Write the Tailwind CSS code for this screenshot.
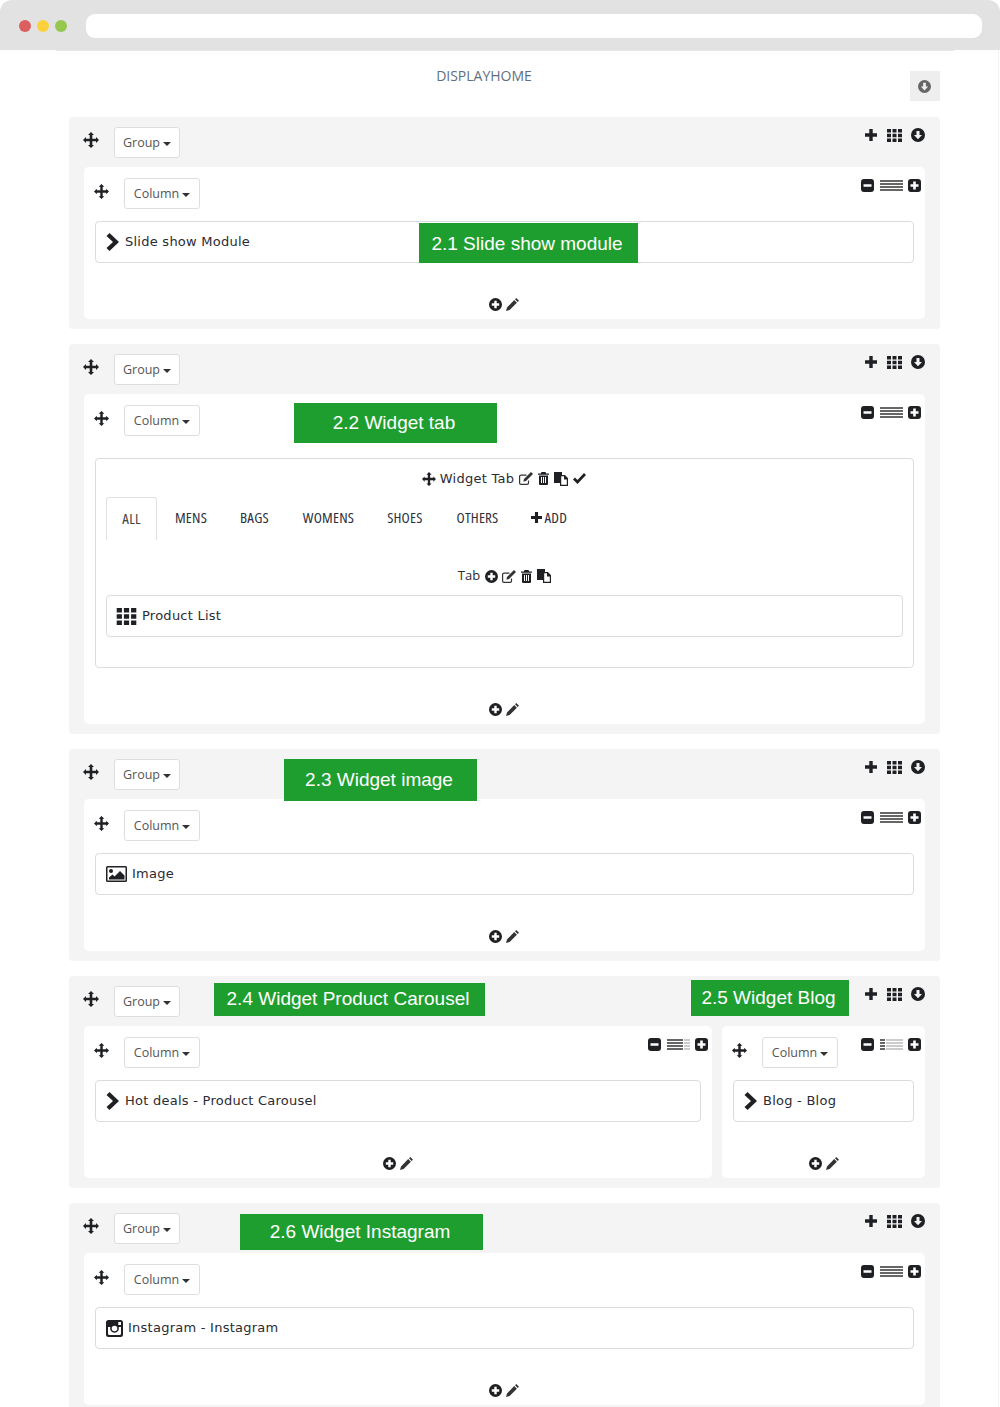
<!doctype html>
<html>
<head>
<meta charset="utf-8">
<title>Displayhome</title>
<script src="https://cdn.jsdelivr.net/npm/@tailwindcss/browser@4"></script>
</head>
<body class="bg-white">
<svg class="hidden">
  <symbol id="move" viewBox="0 0 16 16"><path d="M8 0l3 3H9.3v3.700H13V5l3 3-3 3V9.300H9.300V13H11l-3 3-3-3h1.700V9.300H3V11L0 8l3-3v1.700h3.700V3H5z"/></symbol>
  <symbol id="plus" viewBox="0 0 12 12"><path d="M4.300 0h3.400v4.300H12v3.400H7.700V12H4.300V7.700H0V4.300h4.300z"/></symbol>
  <symbol id="th" viewBox="0 0 15 13"><path d="M0 0h4v3.500H0zM5.500 0h4v3.500h-4zM11 0h4v3.500h-4zM0 4.800h4v3.400H0zM5.500 4.800h4v3.400h-4zM11 4.800h4v3.400h-4zM0 9.500h4V13H0zM5.500 9.500h4V13h-4zM11 9.500h4V13h-4z"/></symbol>
  <symbol id="circle-down" viewBox="0 0 14 14"><path fill-rule="evenodd" d="M7 0a7 7 0 1 1 0 14A7 7 0 0 1 7 0zM5.500 3v4H3l4 4.300L11 7H8.500V3z"/></symbol>
  <symbol id="circle-plus" viewBox="0 0 14 14"><path fill-rule="evenodd" d="M7 0a7 7 0 1 1 0 14A7 7 0 0 1 7 0zM5.700 3v2.700H3v2.600h2.700V11h2.600V8.300H11V5.700H8.300V3z"/></symbol>
  <symbol id="square-minus" viewBox="0 0 13 13"><path fill-rule="evenodd" d="M3 0h7a3 3 0 0 1 3 3v7a3 3 0 0 1-3 3H3a3 3 0 0 1-3-3V3a3 3 0 0 1 3-3zM2.500 5.200v2.600h8V5.200z"/></symbol>
  <symbol id="square-plus" viewBox="0 0 13 13"><path fill-rule="evenodd" d="M3 0h7a3 3 0 0 1 3 3v7a3 3 0 0 1-3 3H3a3 3 0 0 1-3-3V3a3 3 0 0 1 3-3zM5.200 2.500v2.700H2.500v2.600h2.700v2.700h2.600V7.800h2.700V5.200H7.800V2.500z"/></symbol>
  <symbol id="chevron" viewBox="0 0 13 18"><path d="M3.500 0L13 9l-9.500 9L.5 15l6.500-6L.5 3z"/></symbol>
  <symbol id="pencil" viewBox="0 0 13 13"><path d="M10.300 0L13 2.700l-1.300 1.300L9 1.300zM8.200 2.100l2.700 2.700L3.600 12 0 13l1-3.600z"/></symbol>
  <symbol id="edit" viewBox="0 0 14 13"><path fill="none" stroke="currentColor" stroke-width="1.200" d="M9.500 8.500V11a1.400 1.400 0 0 1-1.400 1.400H2A1.400 1.400 0 0 1 .6 11V4.500A1.400 1.400 0 0 1 2 3.100h5.500"/><path d="M12 0l2 2-7 7-2.600.7L5 7z"/></symbol>
  <symbol id="trash" viewBox="0 0 11 13"><path fill-rule="evenodd" d="M3.500 0h4l.7 1.500H11v1.300H0V1.500h2.800zM1 3.500h9V12a1 1 0 0 1-1 1H2a1 1 0 0 1-1-1zM3 5v6h1V5zM5 5v6h1V5zM7 5v6h1V5z"/></symbol>
  <symbol id="files" viewBox="0 0 14 14"><path d="M0 0h8v3H6v8H0z"/><path fill="#fff" stroke="currentColor" stroke-width="1.200" d="M6.600 3.600h4l2.800 2.800v7H6.600z"/><path d="M10 3.500h1l3 3v1h-4z"/></symbol>
  <symbol id="check" viewBox="0 0 13 11"><path d="M4.500 11L0 6.500l2-2 2.500 2.500L11 0l2 2z"/></symbol>
  <symbol id="picture" viewBox="0 0 21 16"><path fill-rule="evenodd" d="M1.500 0h18A1.500 1.500 0 0 1 21 1.500v13a1.500 1.500 0 0 1-1.500 1.500h-18A1.500 1.500 0 0 1 0 14.500v-13A1.500 1.500 0 0 1 1.500 0zM1.500 1.500v13h18v-13z"/><circle cx="5" cy="5" r="2"/><path d="M3 13.500v-2l3.500-3 2 2L14 5l4.500 4.500v4z"/></symbol>
  <symbol id="instagram" viewBox="0 0 17 17"><path fill-rule="evenodd" d="M2.500 0h12A2.500 2.500 0 0 1 17 2.500v12a2.500 2.500 0 0 1-2.500 2.500h-12A2.500 2.500 0 0 1 0 14.500v-12A2.500 2.500 0 0 1 2.500 0zM2 7v6.500A1.500 1.500 0 0 0 3.500 15h10a1.500 1.500 0 0 0 1.500-1.500V7h-2.300a4.400 4.400 0 1 1-8.400 0zM8.500 5.700a2.800 2.800 0 1 0 0 5.600 2.800 2.800 0 0 0 0-5.600zM12.300 2v3H15V2z"/></symbol>
</svg>

<div class="relative h-[1407px] w-[1000px] overflow-hidden font-['DejaVu_Sans',sans-serif] text-[13px] tracking-[.25px] text-[#2b2b33]">
  <div class="absolute right-[1px] top-[50px] bottom-0 w-px bg-[#f3f3f3]"></div>

  <!-- browser chrome -->
  <div class="flex h-[50px] items-center rounded-t-[12px] bg-[#e2e2e2] pl-[19px] pr-[18px] pt-[2px]">
    <span class="h-3 w-3 rounded-full bg-[#dc5f5f]"></span>
    <span class="ml-[6px] h-3 w-3 rounded-full bg-[#fdd13c]"></span>
    <span class="ml-[6px] h-3 w-3 rounded-full bg-[#96c74f]"></span>
    <div class="ml-[19px] h-6 flex-1 rounded-[9px] bg-white"></div>
  </div>
  <div class="ml-[56px] h-px w-[898px] bg-[#e6e6e6]"></div>

  <main class="ml-[69px] w-[871px]">
    <div class="relative h-[66px]">
      <div class="pr-[41px] pt-[15px] text-center font-['Open_Sans',sans-serif] text-[14px] leading-[20px] tracking-normal text-[#5f6f80]">DISPLAYHOME</div>
      <div class="absolute right-0 top-[20px] flex h-[30px] w-[30px] items-center justify-center bg-[#eeeeee] pr-[2px] text-[#666]">
        <svg class="h-[13px] w-[13px] fill-current"><use href="#circle-down"/></svg>
      </div>
    </div>

    <div class="flex flex-col gap-[15px]">

      <!-- group 1 -->
      <section class="relative h-[212px] rounded-[4px] bg-[#f4f4f4] px-[15px]">
        <div class="flex h-[50px] items-start pt-[10px]">
          <svg class="ml-[-1px] mt-[5px] h-[16px] w-[16px] fill-[#1f2024]"><use href="#move"/></svg>
          <button class="ml-[15px] flex h-[31px] w-[66px] items-center justify-center rounded-[3px] border border-[#dedede] bg-white pt-[2px] font-['Open_Sans',sans-serif] text-[12.500px] tracking-normal text-[#555]">Group<span class="ml-[3px] border-x-4 border-t-4 border-x-transparent border-t-[#333]"></span></button>
          <div class="ml-auto mt-[1px] flex items-center">
            <svg class="h-[12px] w-[12px] fill-[#1f2024]"><use href="#plus"/></svg>
            <svg class="ml-[10px] h-[13px] w-[15px] fill-[#1f2024]"><use href="#th"/></svg>
            <svg class="ml-[9px] h-[14px] w-[14px] fill-[#1f2024]"><use href="#circle-down"/></svg>
          </div>
        </div>
        <div class="h-[152px] rounded-[5px] bg-white px-[11px]">
          <div class="flex h-[54px] items-start pt-[11px]">
            <svg class="ml-[-1px] mt-[6px] h-[15px] w-[15px] fill-[#1f2024]"><use href="#move"/></svg>
            <button class="ml-[15px] flex h-[31px] w-[76px] items-center justify-center rounded-[3px] border border-[#dedede] bg-white pt-[2px] font-['Open_Sans',sans-serif] text-[12.500px] tracking-normal text-[#555]">Column<span class="ml-[3px] border-x-4 border-t-4 border-x-transparent border-t-[#333]"></span></button>
            <div class="ml-auto mr-[-7px] mt-[1px] flex items-center">
              <svg class="h-[13px] w-[13px] fill-[#1f2024]"><use href="#square-minus"/></svg>
              <div class="ml-[6px] flex h-[11px] w-[23px] flex-col justify-between"><i class="h-[2px] bg-[#666]"></i><i class="h-[2px] bg-[#666]"></i><i class="h-[2px] bg-[#666]"></i><i class="h-[2px] bg-[#666]"></i></div>
              <svg class="ml-[5px] h-[13px] w-[13px] fill-[#1f2024]"><use href="#square-plus"/></svg>
            </div>
          </div>
          <div class="flex h-[42px] items-center rounded-[4px] border border-[#dcdcdc] pl-[10px]">
            <svg class="h-[18px] w-[13px] fill-[#1f2024]"><use href="#chevron"/></svg>
            <span class="ml-[6px]">Slide show Module</span>
          </div>
          <div class="mt-[35px] flex items-center justify-center pr-[2px]">
            <svg class="h-[13px] w-[13px] fill-[#1f2024]"><use href="#circle-plus"/></svg>
            <svg class="ml-[4px] h-[13px] w-[13px] fill-[#333]"><use href="#pencil"/></svg>
          </div>
        </div>
        <div class="absolute left-[350px] top-[106px] flex h-[40px] w-[219px] items-center justify-center bg-[#1f9e30] pr-[3px] pt-[2px] font-['Liberation_Sans',sans-serif] text-[19px] tracking-normal text-white">2.1 Slide show module</div>
      </section>

      <!-- group 2 -->
      <section class="relative h-[390px] rounded-[4px] bg-[#f4f4f4] px-[15px]">
        <div class="flex h-[50px] items-start pt-[10px]">
          <svg class="ml-[-1px] mt-[5px] h-[16px] w-[16px] fill-[#1f2024]"><use href="#move"/></svg>
          <button class="ml-[15px] flex h-[31px] w-[66px] items-center justify-center rounded-[3px] border border-[#dedede] bg-white pt-[2px] font-['Open_Sans',sans-serif] text-[12.500px] tracking-normal text-[#555]">Group<span class="ml-[3px] border-x-4 border-t-4 border-x-transparent border-t-[#333]"></span></button>
          <div class="ml-auto mt-[1px] flex items-center">
            <svg class="h-[12px] w-[12px] fill-[#1f2024]"><use href="#plus"/></svg>
            <svg class="ml-[10px] h-[13px] w-[15px] fill-[#1f2024]"><use href="#th"/></svg>
            <svg class="ml-[9px] h-[14px] w-[14px] fill-[#1f2024]"><use href="#circle-down"/></svg>
          </div>
        </div>
        <div class="h-[330px] rounded-[5px] bg-white px-[11px]">
          <div class="flex h-[64px] items-start pt-[11px]">
            <svg class="ml-[-1px] mt-[6px] h-[15px] w-[15px] fill-[#1f2024]"><use href="#move"/></svg>
            <button class="ml-[15px] flex h-[31px] w-[76px] items-center justify-center rounded-[3px] border border-[#dedede] bg-white pt-[2px] font-['Open_Sans',sans-serif] text-[12.500px] tracking-normal text-[#555]">Column<span class="ml-[3px] border-x-4 border-t-4 border-x-transparent border-t-[#333]"></span></button>
            <div class="ml-auto mr-[-7px] mt-[1px] flex items-center">
              <svg class="h-[13px] w-[13px] fill-[#1f2024]"><use href="#square-minus"/></svg>
              <div class="ml-[6px] flex h-[11px] w-[23px] flex-col justify-between"><i class="h-[2px] bg-[#666]"></i><i class="h-[2px] bg-[#666]"></i><i class="h-[2px] bg-[#666]"></i><i class="h-[2px] bg-[#666]"></i></div>
              <svg class="ml-[5px] h-[13px] w-[13px] fill-[#1f2024]"><use href="#square-plus"/></svg>
            </div>
          </div>
          <!-- widget tab -->
          <div class="h-[210px] rounded-[4px] border border-[#dcdcdc] px-[10px]">
            <div class="flex h-[38px] items-center justify-center pr-[1px] pt-[1px]">
              <svg class="h-[14px] w-[14px] fill-[#1f2024]"><use href="#move"/></svg>
              <span class="ml-[4px]">Widget Tab</span>
              <svg class="ml-[5px] h-[13px] w-[14px] fill-[#333] text-[#333]"><use href="#edit"/></svg>
              <svg class="ml-[5px] h-[13px] w-[11px] fill-[#1f2024]"><use href="#trash"/></svg>
              <svg class="ml-[5px] h-[14px] w-[14px] fill-[#1f2024] text-[#1f2024]"><use href="#files"/></svg>
              <svg class="ml-[5px] h-[11px] w-[13px] fill-[#1f2024]"><use href="#check"/></svg>
            </div>
            <ul class="flex h-[43px] items-center pb-[2px] font-['Open_Sans',sans-serif] text-[15px] font-stretch-condensed tracking-[.2px] text-[#2b3040]">
              <li class="mt-[2px] flex h-[43px] w-[51px] items-center justify-center rounded-t-[3px] border-x border-t border-[#e2e2e2] pb-[2px] text-[#444]">ALL</li>
              <li class="ml-[18px]">MENS</li>
              <li class="ml-[33px]">BAGS</li>
              <li class="ml-[34px]">WOMENS</li>
              <li class="ml-[33px]">SHOES</li>
              <li class="ml-[34px]">OTHERS</li>
              <li class="ml-[33px] flex items-center"><svg class="mr-[2px] h-[11px] w-[11px] fill-[#1f2024]"><use href="#plus"/></svg>ADD</li>
            </ul>
            <div class="flex h-[55px] items-center justify-center pt-[17px] font-['Open_Sans',sans-serif] tracking-normal">
              <span class="text-[13px]">Tab</span>
              <svg class="ml-[5px] h-[13px] w-[13px] fill-[#1f2024]"><use href="#circle-plus"/></svg>
              <svg class="ml-[4px] h-[13px] w-[14px] fill-[#333] text-[#333]"><use href="#edit"/></svg>
              <svg class="ml-[5px] h-[13px] w-[11px] fill-[#1f2024]"><use href="#trash"/></svg>
              <svg class="ml-[5px] h-[14px] w-[14px] fill-[#1f2024] text-[#1f2024]"><use href="#files"/></svg>
            </div>
            <div class="flex h-[42px] items-center rounded-[4px] border border-[#dcdcdc] pl-[9px]">
              <svg class="h-[17px] w-[21px] fill-[#1f2024]"><use href="#th"/></svg>
              <span class="ml-[5px]">Product List</span>
            </div>
          </div>
          <div class="mt-[35px] flex items-center justify-center pr-[2px]">
            <svg class="h-[13px] w-[13px] fill-[#1f2024]"><use href="#circle-plus"/></svg>
            <svg class="ml-[4px] h-[13px] w-[13px] fill-[#333]"><use href="#pencil"/></svg>
          </div>
        </div>
        <div class="absolute left-[225px] top-[59px] flex h-[40px] w-[203px] items-center justify-center bg-[#1f9e30] pr-[3px] font-['Liberation_Sans',sans-serif] text-[19px] tracking-normal text-white">2.2 Widget tab</div>
      </section>

      <!-- group 3 -->
      <section class="relative h-[212px] rounded-[4px] bg-[#f4f4f4] px-[15px]">
        <div class="flex h-[50px] items-start pt-[10px]">
          <svg class="ml-[-1px] mt-[5px] h-[16px] w-[16px] fill-[#1f2024]"><use href="#move"/></svg>
          <button class="ml-[15px] flex h-[31px] w-[66px] items-center justify-center rounded-[3px] border border-[#dedede] bg-white pt-[2px] font-['Open_Sans',sans-serif] text-[12.500px] tracking-normal text-[#555]">Group<span class="ml-[3px] border-x-4 border-t-4 border-x-transparent border-t-[#333]"></span></button>
          <div class="ml-auto mt-[1px] flex items-center">
            <svg class="h-[12px] w-[12px] fill-[#1f2024]"><use href="#plus"/></svg>
            <svg class="ml-[10px] h-[13px] w-[15px] fill-[#1f2024]"><use href="#th"/></svg>
            <svg class="ml-[9px] h-[14px] w-[14px] fill-[#1f2024]"><use href="#circle-down"/></svg>
          </div>
        </div>
        <div class="h-[152px] rounded-[5px] bg-white px-[11px]">
          <div class="flex h-[54px] items-start pt-[11px]">
            <svg class="ml-[-1px] mt-[6px] h-[15px] w-[15px] fill-[#1f2024]"><use href="#move"/></svg>
            <button class="ml-[15px] flex h-[31px] w-[76px] items-center justify-center rounded-[3px] border border-[#dedede] bg-white pt-[2px] font-['Open_Sans',sans-serif] text-[12.500px] tracking-normal text-[#555]">Column<span class="ml-[3px] border-x-4 border-t-4 border-x-transparent border-t-[#333]"></span></button>
            <div class="ml-auto mr-[-7px] mt-[1px] flex items-center">
              <svg class="h-[13px] w-[13px] fill-[#1f2024]"><use href="#square-minus"/></svg>
              <div class="ml-[6px] flex h-[11px] w-[23px] flex-col justify-between"><i class="h-[2px] bg-[#666]"></i><i class="h-[2px] bg-[#666]"></i><i class="h-[2px] bg-[#666]"></i><i class="h-[2px] bg-[#666]"></i></div>
              <svg class="ml-[5px] h-[13px] w-[13px] fill-[#1f2024]"><use href="#square-plus"/></svg>
            </div>
          </div>
          <div class="flex h-[42px] items-center rounded-[4px] border border-[#dcdcdc] pl-[10px]">
            <svg class="h-[16px] w-[21px] fill-[#1f2024]"><use href="#picture"/></svg>
            <span class="ml-[5px]">Image</span>
          </div>
          <div class="mt-[35px] flex items-center justify-center pr-[2px]">
            <svg class="h-[13px] w-[13px] fill-[#1f2024]"><use href="#circle-plus"/></svg>
            <svg class="ml-[4px] h-[13px] w-[13px] fill-[#333]"><use href="#pencil"/></svg>
          </div>
        </div>
        <div class="absolute left-[215px] top-[10px] flex h-[42px] w-[193px] items-center justify-center bg-[#1f9e30] pr-[3px] font-['Liberation_Sans',sans-serif] text-[19px] tracking-normal text-white">2.3 Widget image</div>
      </section>

      <!-- group 4 -->
      <section class="relative h-[212px] rounded-[4px] bg-[#f4f4f4] px-[15px]">
        <div class="flex h-[50px] items-start pt-[10px]">
          <svg class="ml-[-1px] mt-[5px] h-[16px] w-[16px] fill-[#1f2024]"><use href="#move"/></svg>
          <button class="ml-[15px] flex h-[31px] w-[66px] items-center justify-center rounded-[3px] border border-[#dedede] bg-white pt-[2px] font-['Open_Sans',sans-serif] text-[12.500px] tracking-normal text-[#555]">Group<span class="ml-[3px] border-x-4 border-t-4 border-x-transparent border-t-[#333]"></span></button>
          <div class="ml-auto mt-[1px] flex items-center">
            <svg class="h-[12px] w-[12px] fill-[#1f2024]"><use href="#plus"/></svg>
            <svg class="ml-[10px] h-[13px] w-[15px] fill-[#1f2024]"><use href="#th"/></svg>
            <svg class="ml-[9px] h-[14px] w-[14px] fill-[#1f2024]"><use href="#circle-down"/></svg>
          </div>
        </div>
        <div class="flex gap-[10px]">
          <div class="h-[152px] w-[628px] rounded-[5px] bg-white px-[11px]">
            <div class="flex h-[54px] items-start pt-[11px]">
              <svg class="ml-[-1px] mt-[6px] h-[15px] w-[15px] fill-[#1f2024]"><use href="#move"/></svg>
              <button class="ml-[15px] flex h-[31px] w-[76px] items-center justify-center rounded-[3px] border border-[#dedede] bg-white pt-[2px] font-['Open_Sans',sans-serif] text-[12.500px] tracking-normal text-[#555]">Column<span class="ml-[3px] border-x-4 border-t-4 border-x-transparent border-t-[#333]"></span></button>
              <div class="ml-auto mr-[-7px] mt-[1px] flex items-center">
                <svg class="h-[13px] w-[13px] fill-[#1f2024]"><use href="#square-minus"/></svg>
                <div class="ml-[6px] flex h-[11px] w-[23px] flex-col justify-between"><i class="h-[2px] bg-[linear-gradient(90deg,#666_16px,#fff_16px,#fff_17px,#ccc_17px)]"></i><i class="h-[2px] bg-[linear-gradient(90deg,#666_16px,#fff_16px,#fff_17px,#ccc_17px)]"></i><i class="h-[2px] bg-[linear-gradient(90deg,#666_16px,#fff_16px,#fff_17px,#ccc_17px)]"></i><i class="h-[2px] bg-[linear-gradient(90deg,#666_16px,#fff_16px,#fff_17px,#ccc_17px)]"></i></div>
                <svg class="ml-[5px] h-[13px] w-[13px] fill-[#1f2024]"><use href="#square-plus"/></svg>
              </div>
            </div>
            <div class="flex h-[42px] items-center rounded-[4px] border border-[#dcdcdc] pl-[10px]">
              <svg class="h-[18px] w-[13px] fill-[#1f2024]"><use href="#chevron"/></svg>
              <span class="ml-[6px]">Hot deals - Product Carousel</span>
            </div>
            <div class="mt-[35px] flex items-center justify-center">
              <svg class="h-[13px] w-[13px] fill-[#1f2024]"><use href="#circle-plus"/></svg>
              <svg class="ml-[4px] h-[13px] w-[13px] fill-[#333]"><use href="#pencil"/></svg>
            </div>
          </div>
          <div class="h-[152px] w-[203px] rounded-[5px] bg-white px-[11px]">
            <div class="flex h-[54px] items-start pt-[11px]">
              <svg class="ml-[-1px] mt-[6px] h-[15px] w-[15px] fill-[#1f2024]"><use href="#move"/></svg>
              <button class="ml-[15px] flex h-[31px] w-[76px] items-center justify-center rounded-[3px] border border-[#dedede] bg-white pt-[2px] font-['Open_Sans',sans-serif] text-[12.500px] tracking-normal text-[#555]">Column<span class="ml-[3px] border-x-4 border-t-4 border-x-transparent border-t-[#333]"></span></button>
              <div class="ml-auto mr-[-7px] mt-[1px] flex items-center">
                <svg class="h-[13px] w-[13px] fill-[#1f2024]"><use href="#square-minus"/></svg>
                <div class="ml-[6px] flex h-[11px] w-[23px] flex-col justify-between"><i class="h-[2px] bg-[linear-gradient(90deg,#666_5px,#fff_5px,#fff_6px,#ccc_6px)]"></i><i class="h-[2px] bg-[linear-gradient(90deg,#666_5px,#fff_5px,#fff_6px,#ccc_6px)]"></i><i class="h-[2px] bg-[linear-gradient(90deg,#666_5px,#fff_5px,#fff_6px,#ccc_6px)]"></i><i class="h-[2px] bg-[linear-gradient(90deg,#666_5px,#fff_5px,#fff_6px,#ccc_6px)]"></i></div>
                <svg class="ml-[5px] h-[13px] w-[13px] fill-[#1f2024]"><use href="#square-plus"/></svg>
              </div>
            </div>
            <div class="flex h-[42px] items-center rounded-[4px] border border-[#dcdcdc] pl-[10px]">
              <svg class="h-[18px] w-[13px] fill-[#1f2024]"><use href="#chevron"/></svg>
              <span class="ml-[6px]">Blog - Blog</span>
            </div>
            <div class="mt-[35px] flex items-center justify-center">
              <svg class="h-[13px] w-[13px] fill-[#1f2024]"><use href="#circle-plus"/></svg>
              <svg class="ml-[4px] h-[13px] w-[13px] fill-[#333]"><use href="#pencil"/></svg>
            </div>
          </div>
        </div>
        <div class="absolute left-[145px] top-[7px] flex h-[33px] w-[271px] items-center justify-center bg-[#1f9e30] pr-[3px] font-['Liberation_Sans',sans-serif] text-[19px] tracking-normal text-white">2.4 Widget Product Carousel</div>
        <div class="absolute left-[622px] top-[4px] flex h-[36px] w-[158px] items-center justify-center bg-[#1f9e30] pr-[3px] font-['Liberation_Sans',sans-serif] text-[19px] tracking-normal text-white">2.5 Widget Blog</div>
      </section>

      <!-- group 5 -->
      <section class="relative h-[212px] rounded-[4px] bg-[#f4f4f4] px-[15px]">
        <div class="flex h-[50px] items-start pt-[10px]">
          <svg class="ml-[-1px] mt-[5px] h-[16px] w-[16px] fill-[#1f2024]"><use href="#move"/></svg>
          <button class="ml-[15px] flex h-[31px] w-[66px] items-center justify-center rounded-[3px] border border-[#dedede] bg-white pt-[2px] font-['Open_Sans',sans-serif] text-[12.500px] tracking-normal text-[#555]">Group<span class="ml-[3px] border-x-4 border-t-4 border-x-transparent border-t-[#333]"></span></button>
          <div class="ml-auto mt-[1px] flex items-center">
            <svg class="h-[12px] w-[12px] fill-[#1f2024]"><use href="#plus"/></svg>
            <svg class="ml-[10px] h-[13px] w-[15px] fill-[#1f2024]"><use href="#th"/></svg>
            <svg class="ml-[9px] h-[14px] w-[14px] fill-[#1f2024]"><use href="#circle-down"/></svg>
          </div>
        </div>
        <div class="h-[152px] rounded-[5px] bg-white px-[11px]">
          <div class="flex h-[54px] items-start pt-[11px]">
            <svg class="ml-[-1px] mt-[6px] h-[15px] w-[15px] fill-[#1f2024]"><use href="#move"/></svg>
            <button class="ml-[15px] flex h-[31px] w-[76px] items-center justify-center rounded-[3px] border border-[#dedede] bg-white pt-[2px] font-['Open_Sans',sans-serif] text-[12.500px] tracking-normal text-[#555]">Column<span class="ml-[3px] border-x-4 border-t-4 border-x-transparent border-t-[#333]"></span></button>
            <div class="ml-auto mr-[-7px] mt-[1px] flex items-center">
              <svg class="h-[13px] w-[13px] fill-[#1f2024]"><use href="#square-minus"/></svg>
              <div class="ml-[6px] flex h-[11px] w-[23px] flex-col justify-between"><i class="h-[2px] bg-[#666]"></i><i class="h-[2px] bg-[#666]"></i><i class="h-[2px] bg-[#666]"></i><i class="h-[2px] bg-[#666]"></i></div>
              <svg class="ml-[5px] h-[13px] w-[13px] fill-[#1f2024]"><use href="#square-plus"/></svg>
            </div>
          </div>
          <div class="flex h-[42px] items-center rounded-[4px] border border-[#dcdcdc] pl-[10px]">
            <svg class="h-[17px] w-[17px] fill-[#1f2024]"><use href="#instagram"/></svg>
            <span class="ml-[5px]">Instagram - Instagram</span>
          </div>
          <div class="mt-[35px] flex items-center justify-center pr-[2px]">
            <svg class="h-[13px] w-[13px] fill-[#1f2024]"><use href="#circle-plus"/></svg>
            <svg class="ml-[4px] h-[13px] w-[13px] fill-[#333]"><use href="#pencil"/></svg>
          </div>
        </div>
        <div class="absolute left-[171px] top-[11px] flex h-[36px] w-[243px] items-center justify-center bg-[#1f9e30] pr-[3px] font-['Liberation_Sans',sans-serif] text-[19px] tracking-normal text-white">2.6 Widget Instagram</div>
      </section>

    </div>
  </main>
</div>
</body>
</html>
